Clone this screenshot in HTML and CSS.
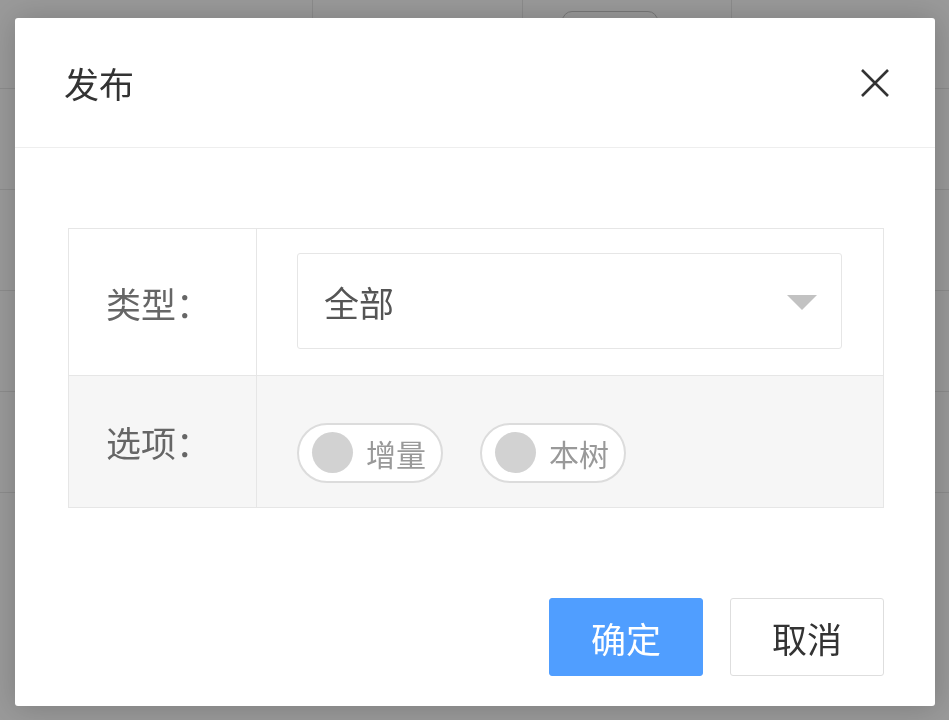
FILE: index.html
```html
<!DOCTYPE html>
<html lang="zh-CN">
<head>
<meta charset="utf-8">
<title>发布</title>
<link rel="stylesheet" href="styles.css">
</head>
<body>
<div class="page">
  <div class="bg-row bg-row-first">
    <div class="bg-cell"></div>
    <div class="bg-cell"></div>
    <div class="bg-cell bg-cell-btn"><span class="bg-btn"></span></div>
    <div class="bg-cell"></div>
  </div>
  <div class="bg-row"><div class="bg-cell"></div><div class="bg-cell"></div><div class="bg-cell"></div><div class="bg-cell"></div></div>
  <div class="bg-row"><div class="bg-cell"></div><div class="bg-cell"></div><div class="bg-cell"></div><div class="bg-cell"></div></div>
  <div class="bg-row"><div class="bg-cell"></div><div class="bg-cell"></div><div class="bg-cell"></div><div class="bg-cell"></div></div>
  <div class="bg-row"><div class="bg-cell"></div><div class="bg-cell"></div><div class="bg-cell"></div><div class="bg-cell"></div></div>
</div>
<div class="shade"></div>
<div class="modal">
  <div class="modal-header">
    <span class="modal-title">发布</span>
    <span class="modal-close">
      <svg width="30" height="30" viewBox="0 0 30 30"><path d="M2 2 L28 28 M28 2 L2 28" stroke="#333" stroke-width="2.6" fill="none" stroke-linecap="butt"/></svg>
    </span>
  </div>
  <div class="modal-body">
    <div class="form-table">
      <div class="cell label">类型：</div>
      <div class="cell field field-select">
        <div class="select">
          <span class="select-value">全部</span>
          <span class="select-arrow"></span>
        </div>
      </div>
      <div class="cell label alt">选项：</div>
      <div class="cell field alt">
        <div class="switches">
          <span class="switch"><span class="knob"></span><span class="switch-text">增量</span></span>
          <span class="switch"><span class="knob"></span><span class="switch-text">本树</span></span>
        </div>
      </div>
    </div>
  </div>
  <div class="modal-footer">
    <button class="btn btn-primary">确定</button>
    <button class="btn btn-default">取消</button>
  </div>
</div>
</body>
</html>
```
FILE: styles.css
```css
* { box-sizing: border-box; }
html, body { margin: 0; padding: 0; }
body {
  width: 949px;
  height: 720px;
  overflow: hidden;
  background: #fff;
  font-family: "Noto Sans CJK SC", "Noto Sans", sans-serif;
}
.page { background: #fff; }
.bg-row {
  display: grid;
  grid-template-columns: 313px 210px 209px 1fr;
  height: 101px;
  border-bottom: 1px solid #e8e8e8;
}
.bg-row-first { height: 89px; }
.bg-cell { border-right: 1px solid #e8e8e8; }
.bg-cell:last-child { border-right: none; }
.bg-cell-btn { padding: 11px 0 0 39px; }
.bg-btn {
  display: block;
  width: 96px;
  height: 44px;
  border: 1px solid #c8c8c8;
  border-radius: 10px;
}
.shade {
  position: fixed;
  inset: 0;
  background: rgba(0, 0, 0, 0.4);
}
.modal {
  position: fixed;
  left: 15px;
  top: 18px;
  width: 920px;
  height: 688px;
  background: #fff;
  border-radius: 3px;
  box-shadow: 1px 1px 30px rgba(0, 0, 0, 0.2);
  display: flex;
  flex-direction: column;
}
.modal-header {
  height: 130px;
  border-bottom: 1px solid #eeeeee;
  display: flex;
  align-items: center;
  justify-content: space-between;
  padding: 0 45px 0 49px;
}
.modal-title {
  font-size: 35px;
  color: #333;
  line-height: 1;
}
.modal-close { display: flex; width: 30px; height: 30px; }
.modal-body { padding: 80px 51px 0 53px; }
.form-table {
  display: grid;
  grid-template-columns: 188px 1fr;
  grid-template-rows: 146px 132px;
  border: 1px solid #e6e6e6;
}
.cell { display: flex; align-items: center; }
.cell.alt { background: #f6f6f6; border-top: 1px solid #e6e6e6; }
.label {
  border-right: 1px solid #e6e6e6;
  padding-left: 37px;
  font-size: 35px;
  color: #666;
}
.field { padding: 0 41px 0 40px; }
.field-select { padding-bottom: 2px; }
.select {
  width: 100%;
  height: 96px;
  border: 1px solid #e6e6e6;
  border-radius: 3px;
  background: #fff;
  display: flex;
  align-items: center;
  justify-content: space-between;
  padding: 0 24px 0 26px;
}
.select-value { font-size: 35px; color: #555; }
.select-arrow {
  width: 0;
  height: 0;
  border-left: 15px solid transparent;
  border-right: 15px solid transparent;
  border-top: 15px solid #c2c2c2;
  margin-top: 2px;
}
.switches { display: flex; gap: 37px; padding-top: 22px; }
.switch {
  display: inline-flex;
  align-items: center;
  width: 146px;
  height: 60px;
  border: 2px solid #dcdcdc;
  border-radius: 30px;
  background: #fff;
  padding-left: 13px;
}
.knob {
  width: 41px;
  height: 41px;
  border-radius: 50%;
  background: #d2d2d2;
  flex: none;
}
.switch-text {
  margin-left: 13px;
  font-size: 30px;
  color: #999;
}
.modal-footer {
  margin-top: auto;
  display: flex;
  justify-content: flex-end;
  gap: 27px;
  padding: 0 51px 30px 0;
}
.btn {
  width: 154px;
  height: 78px;
  border-radius: 3px;
  font-family: inherit;
  font-size: 35px;
  padding: 0;
  cursor: pointer;
}
.btn-primary { background: #509eff; border: 1px solid #509eff; color: #fff; }
.btn-default { background: #fff; border: 1px solid #dedede; color: #333; }
```
